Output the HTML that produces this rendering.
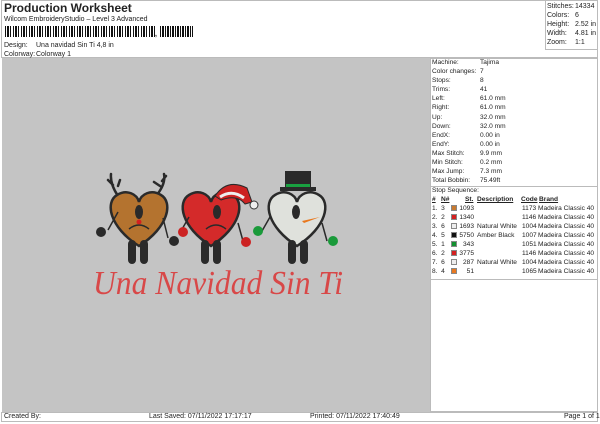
<!DOCTYPE html>
<html><head><meta charset="utf-8"><style>
*{margin:0;padding:0;box-sizing:border-box}
body{width:600px;height:424px;background:#fff;font-family:"Liberation Sans",sans-serif;color:#222;position:relative;overflow:hidden;font-size:7px}
.a{position:absolute;white-space:nowrap;line-height:9px}
.box{position:absolute;border:1px solid #bbb}
.sw{display:inline-block;width:6px;height:6px;border:1px solid #888;vertical-align:-1px}
.s{font-size:6.6px}
</style></head><body>
<div class="box" style="left:1px;top:0;width:597px;height:58px"></div>
<div class="a" style="left:4px;top:1px;font-size:12px;font-weight:bold;line-height:14px">Production Worksheet</div>
<div class="a" style="left:4px;top:15px">Wilcom EmbroideryStudio – Level 3 Advanced</div>
<div class="a" style="left:5px;top:26px;width:150px;height:11px;background:repeating-linear-gradient(90deg,#111 0 1px,#fff 1px 2px,#111 2px 4px,#fff 4px 5px,#111 5px 6px,#fff 6px 8px)"></div>
<div class="a" style="left:160px;top:26px;width:33px;height:11px;background:repeating-linear-gradient(90deg,#111 0 1px,#fff 1px 2px,#111 2px 4px,#fff 4px 5px)"></div>
<div class="a" style="left:155px;top:30px;font-weight:bold">,</div>
<div class="a" style="left:4px;top:41px">Design:</div><div class="a" style="left:36px;top:41px">Una navidad Sin Ti 4,8 in</div>
<div class="a" style="left:4px;top:50px">Colorway:</div><div class="a" style="left:36px;top:50px">Colorway 1</div>
<div class="box" style="left:545px;top:0;width:53px;height:50px"></div>
<div class="a" style="left:547px;top:2px">Stitches:</div><div class="a" style="left:575px;top:2px">14334</div>
<div class="a" style="left:547px;top:11px">Colors:</div><div class="a" style="left:575px;top:11px">6</div>
<div class="a" style="left:547px;top:20px">Height:</div><div class="a" style="left:575px;top:20px">2.52 in</div>
<div class="a" style="left:547px;top:29px">Width:</div><div class="a" style="left:575px;top:29px">4.81 in</div>
<div class="a" style="left:547px;top:38px">Zoom:</div><div class="a" style="left:575px;top:38px">1:1</div>

<div style="position:absolute;left:2px;top:58px;width:429px;height:354px;background:#c4c4c4"></div>
<div class="box" style="left:430px;top:58px;width:168px;height:354px"></div>
<div class="box" style="left:430px;top:186px;width:168px;height:94px"></div>
<div class="a s" style="left:432px;top:58px;line-height:9.1px">Machine:<br>Color changes:<br>Stops:<br>Trims:<br>Left:<br>Right:<br>Up:<br>Down:<br>EndX:<br>EndY:<br>Max Stitch:<br>Min Stitch:<br>Max Jump:<br>Total Bobbin:</div>
<div class="a s" style="left:432px;top:186px">Stop Sequence:</div>
<div class="a s" style="left:480px;top:58px;line-height:9.1px">Tajima<br>7<br>8<br>41<br>61.0 mm<br>61.0 mm<br>32.0 mm<br>32.0 mm<br>0.00 in<br>0.00 in<br>9.9 mm<br>0.2 mm<br>7.3 mm<br>75.49ft</div>
<div class="a s" style="left:432px;top:195px;font-weight:bold;text-decoration:underline">#</div>
<div class="a s" style="left:441px;top:195px;font-weight:bold;text-decoration:underline">N#</div>
<div class="a s" style="left:465px;top:195px;font-weight:bold;text-decoration:underline">St.</div>
<div class="a s" style="left:477px;top:195px;font-weight:bold;text-decoration:underline">Description</div>
<div class="a s" style="left:521px;top:195px;font-weight:bold;text-decoration:underline">Code</div>
<div class="a s" style="left:539px;top:195px;font-weight:bold;text-decoration:underline">Brand</div>
<div class="a s" style="left:432px;top:204px;line-height:9px">1.&nbsp; 3<br>2.&nbsp; 2<br>3.&nbsp; 6<br>4.&nbsp; 5<br>5.&nbsp; 1<br>6.&nbsp; 2<br>7.&nbsp; 6<br>8.&nbsp; 4</div>
<div class="a" style="left:451px;top:204px;line-height:9px">
<span class="sw" style="background:#c87a30"></span><br><span class="sw" style="background:#d42020"></span><br><span class="sw" style="background:#eee"></span><br><span class="sw" style="background:#111"></span><br><span class="sw" style="background:#129030"></span><br><span class="sw" style="background:#d42020"></span><br><span class="sw" style="background:#eee"></span><br><span class="sw" style="background:#e87820"></span></div>
<div class="a s" style="left:458px;top:204px;width:16px;text-align:right;line-height:9px">1093<br>1340<br>1693<br>5750<br>343<br>3775<br>287<br>51</div>
<div class="a s" style="left:477px;top:204px;line-height:9px"><br><br>Natural White<br>Amber Black<br><br><br>Natural White<br></div>
<div class="a s" style="left:522px;top:204px;line-height:9px">1173<br>1146<br>1004<br>1007<br>1051<br>1146<br>1004<br>1065</div>
<div class="a s" style="left:538px;top:204px;line-height:9px">Madeira Classic 40<br>Madeira Classic 40<br>Madeira Classic 40<br>Madeira Classic 40<br>Madeira Classic 40<br>Madeira Classic 40<br>Madeira Classic 40<br>Madeira Classic 40</div>

<div class="box" style="left:1px;top:412px;width:597px;height:10px"></div>
<div class="a" style="left:4px;top:412px">Created By:</div>
<div class="a" style="left:149px;top:412px">Last Saved: 07/11/2022 17:17:17</div>
<div class="a" style="left:310px;top:412px">Printed: 07/11/2022 17:40:49</div>
<div class="a" style="left:564px;top:412px">Page 1 of 1</div>

<svg style="position:absolute;left:0;top:0" width="600" height="424">
<defs><path id="h" d="M0 54 C-30 35 -34 10 -22 3 C-12 -3 -2 2 0 10 C2 2 12 -3 22 3 C34 10 30 35 0 54Z"/></defs>
<g stroke="#2a2a2a" stroke-width="2.5" fill="none" stroke-linecap="round">
<path d="M118 196 q-8 -12 -7 -22 M113 185 l-5 -5 M118 186 l2 -6 M156 196 q10 -12 8 -22 M160 186 l-6 -4 M162 181 l4 -5"/>
</g>
<g stroke="#2a2a2a" stroke-width="2.5">
<use href="#h" x="139" y="192" fill="#b4732f"/>
<use href="#h" x="211" y="192" fill="#d42a2a"/>
<use href="#h" x="297" y="192" fill="#dfe1dc"/>
</g>
<path d="M215 196 q12 -18 32 -8 l5 14 l-7 2 q-8 -10 -24 -4z" fill="#cc2222" stroke="#2a2a2a"/>
<path d="M220 197 q12 -8 24 1" stroke="#eee" stroke-width="3" fill="none"/>
<circle cx="254" cy="205" r="4" fill="#eee" stroke="#333"/>
<rect x="285" y="171" width="26" height="17" fill="#2a2a2a"/><rect x="280" y="187" width="36" height="4" fill="#2a2a2a"/>
<rect x="286" y="184" width="24" height="3" fill="#19a040"/>
<g fill="#2a2a2a">
<rect x="128" y="240" width="8" height="24" rx="4"/><rect x="140" y="240" width="8" height="24" rx="4"/>
<rect x="201" y="240" width="8" height="24" rx="4"/><rect x="213" y="240" width="8" height="24" rx="4"/>
<rect x="288" y="240" width="8" height="24" rx="4"/><rect x="300" y="240" width="8" height="24" rx="4"/>
<circle cx="101" cy="232" r="5"/><circle cx="174" cy="241" r="5"/>
<ellipse cx="139" cy="212" rx="4" ry="7"/><ellipse cx="217" cy="212" rx="4" ry="7"/><ellipse cx="296" cy="212" rx="4" ry="7"/>
</g>
<g stroke="#2a2a2a" stroke-width="1.5" fill="none">
<path d="M129 229 q10 -8 20 0 M206 229 q10 -8 20 0 M108 230 l10 -18 M168 238 l-5 -20 M181 231 l8 -14 M243 241 l-5 -18 M262 231 l8 -14 M327 241 l-5 -18"/>
</g>
<circle cx="139" cy="222" r="2.5" fill="#d42020"/>
<path d="M302 221 l18 -4 l-16 6z" fill="#e8781e"/>
<circle cx="183" cy="232" r="5" fill="#cc2222"/><circle cx="246" cy="242" r="5" fill="#cc2222"/>
<circle cx="258" cy="231" r="5" fill="#1a9a3a"/><circle cx="333" cy="241" r="5" fill="#1a9a3a"/>
<text x="93" y="294" font-family="Liberation Serif,serif" font-style="italic" font-size="34" fill="#d84848" textLength="250" lengthAdjust="spacingAndGlyphs">Una Navidad Sin Ti</text>
</svg>
</body></html>
